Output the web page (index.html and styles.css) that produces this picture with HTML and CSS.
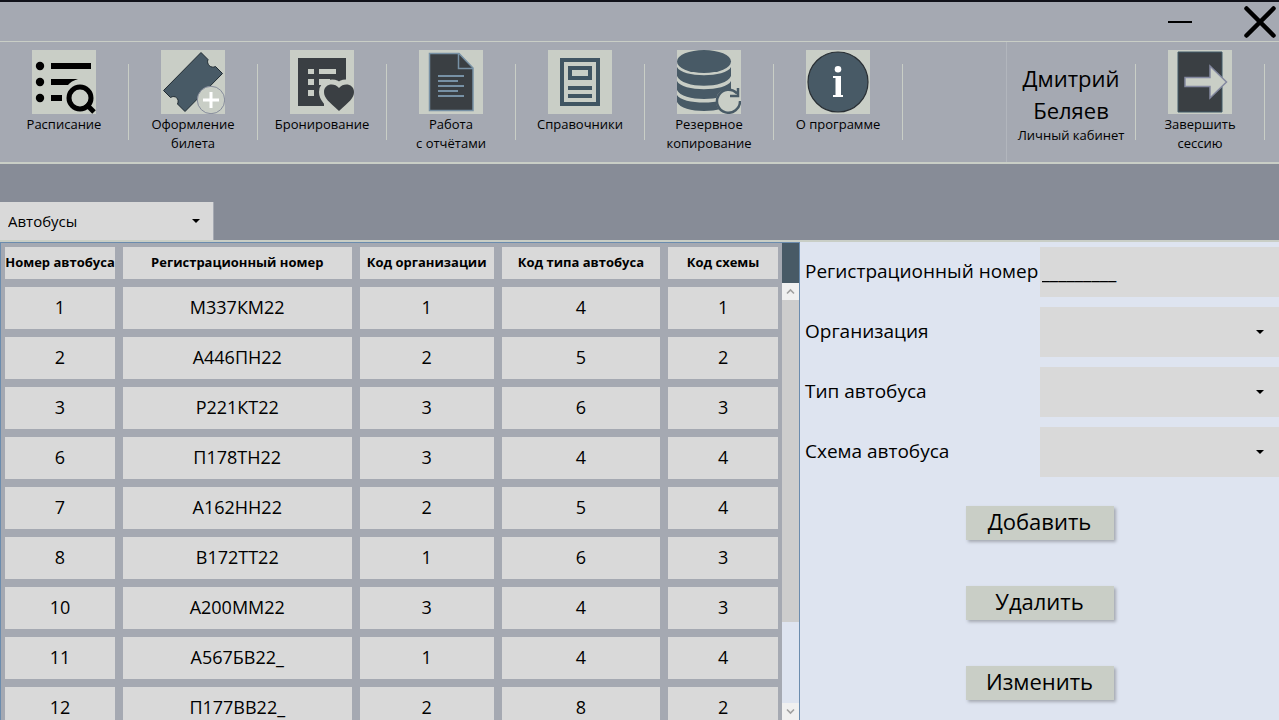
FILE: index.html
```html
<!DOCTYPE html>
<html lang="ru">
<head>
<meta charset="utf-8">
<title>Справочники</title>
<link rel="stylesheet" href="styles.css">
</head>
<body>
<header class="titlebar">
  <button class="win-btn minimize" aria-label="Свернуть"><svg width="24" height="40" viewBox="0 0 24 40"><path d="M0 20H24" stroke="#000" stroke-width="2"/></svg></button>
  <button class="win-btn close" aria-label="Закрыть"><svg width="32" height="40" viewBox="0 0 32 40"><path d="M2.500 6.500L29.500 33.500M29.500 6.500L2.500 33.500" stroke="#000" stroke-width="4.500" stroke-linecap="round"/></svg></button>
</header>

<nav class="toolbar">
  <button class="tool">
    <svg class="icon" viewBox="0 0 64 64"><g fill="#000"><circle cx="8" cy="16" r="4.200"/><circle cx="8" cy="32" r="4.200"/><circle cx="8" cy="48" r="4.200"/><path d="M19 13H59V19H19ZM19 29H46Q39 31 36 35H19ZM19 45H30V51H19Z"/></g><circle cx="48" cy="48" r="11" fill="none" stroke="#000" stroke-width="5"/><path d="M54 54L62 62" stroke="#000" stroke-width="5"/></svg>
    <span>Расписание</span>
  </button>
  <button class="tool">
    <svg class="icon" viewBox="0 0 64 64"><path d="M40 2.500L47 9.500C45 14 50 19 54.500 16.500L61.500 23.500L24 61.500L16.500 54C19 49 14 44.500 9.500 47.500L2.500 40.500Z" fill="#485a66" stroke="#1f2a31"/><circle cx="50" cy="50" r="13.700" fill="#c9cec6" stroke="#858b9b" stroke-width="1"/><path d="M50 42V58M42 50H58" stroke="#fff" stroke-width="3"/></svg>
    <span>Оформление<br>билета</span>
  </button>
  <button class="tool">
    <svg class="icon" viewBox="0 0 64 64"><path d="M8 8H56V34H30V56H8Z" fill="#3a3f43"/><path d="M24 32H34V56H24Z" fill="#3a3f43"/><path d="M18 19H24V24H18ZM29 19H46V24H29ZM18 29H24V35H18ZM29 29H40V35H29ZM18 40H24V46H18Z" fill="#c9cec6"/><path d="M49 61C39 52 34 48 34 42C34 34 44 32 49 38C54 32 64 34 64 42C64 48 59 52 49 61Z" fill="#c9cec6" stroke="#c9cec6" stroke-width="10"/><path d="M49 61C39 52 34 48 34 42C34 34 44 32 49 38C54 32 64 34 64 42C64 48 59 52 49 61Z" fill="#3a3f43"/></svg>
    <span>Бронирование</span>
  </button>
  <button class="tool">
    <svg class="icon" viewBox="0 0 64 64"><path d="M10.500 3.500H40L54 18V60.500H10.500Z" fill="#3a3f43" stroke="#7791a5" stroke-width="1.500"/><path d="M39.500 4V18.500H54" fill="none" stroke="#7791a5" stroke-width="1.500"/><path d="M19 26H45M19 31H39M19 36H45M19 41H39M19 46H45" stroke="#7791a5" stroke-width="2"/></svg>
    <span>Работа<br>с отчётами</span>
  </button>
  <button class="tool">
    <svg class="icon" viewBox="0 0 64 64"><path d="M14 10H50V54H14ZM22 18H42V28H22Z" fill="none" stroke="#405562" stroke-width="4"/><path d="M20 38H44M20 46H44" stroke="#405562" stroke-width="4"/></svg>
    <span>Справочники</span>
  </button>
  <button class="tool">
    <svg class="icon" viewBox="0 0 64 64"><g fill="#485a66"><ellipse cx="27" cy="11.500" rx="27" ry="11.500"/><path d="M0 17C5 28 49 28 54 17V26C49 39 5 39 0 26ZM0 31C5 42 49 42 54 31V40C49 52 5 52 0 40ZM0 45C5 55 49 55 54 45V52C49 64 5 64 0 52Z"/></g><circle cx="51" cy="51" r="12" fill="#c9cec6"/><path d="M60 43.500A11.500 11.500 0 1 0 63 51M61 38V46H53" fill="none" stroke="#485a66" stroke-width="2.500"/></svg>
    <span>Резервное<br>копирование</span>
  </button>
  <button class="tool">
    <svg class="icon" viewBox="0 0 64 64"><circle cx="32" cy="32" r="30" fill="#485a66" stroke="#292f34" stroke-width="1.200"/><circle cx="32" cy="19.200" r="3.300" fill="#fff"/><path d="M27 26H35V45H37V47H27V45H29.500V28H27Z" fill="#fff"/></svg>
    <span>О программе</span>
  </button>
  <div class="session">
    <button class="tool user"><span class="user-name">Дмитрий Беляев</span><span>Личный кабинет</span></button>
    <button class="tool">
      <svg class="icon" viewBox="0 0 64 64"><path d="M10 2H54V62H10Z" fill="#3a3f43" stroke="#405a68"/><path d="M17 27.500H42V16L58.500 32L42 48V36.500H17Z" fill="#c9cec6" stroke="#8489a0" stroke-width="1.500"/></svg>
      <span>Завершить<br>сессию</span>
    </button>
  </div>
</nav>

<div class="picker-bar">
  <div class="drop picker">
    <select aria-label="Справочник"><option>Автобусы</option></select>
  </div>
</div>

<main class="content">
  <section class="grid-panel">
    <table class="buses">
      <colgroup><col class="c-id"><col class="c-reg"><col class="c-org"><col class="c-type"><col class="c-scheme"></colgroup>
      <thead><tr><th>Номер автобуса</th><th>Регистрационный номер</th><th>Код организации</th><th>Код типа автобуса</th><th>Код схемы</th></tr></thead>
      <tbody>
        <tr><td>1</td><td>М337КМ22</td><td>1</td><td>4</td><td>1</td></tr>
        <tr><td>2</td><td>А446ПН22</td><td>2</td><td>5</td><td>2</td></tr>
        <tr><td>3</td><td>Р221КТ22</td><td>3</td><td>6</td><td>3</td></tr>
        <tr><td>6</td><td>П178ТН22</td><td>3</td><td>4</td><td>4</td></tr>
        <tr><td>7</td><td>А162НН22</td><td>2</td><td>5</td><td>4</td></tr>
        <tr><td>8</td><td>В172ТТ22</td><td>1</td><td>6</td><td>3</td></tr>
        <tr><td>10</td><td>А200ММ22</td><td>3</td><td>4</td><td>3</td></tr>
        <tr><td>11</td><td>А567БВ22_</td><td>1</td><td>4</td><td>4</td></tr>
        <tr><td>12</td><td>П177ВВ22_</td><td>2</td><td>8</td><td>2</td></tr>
      </tbody>
    </table>
    <div class="scroll">
      <div class="scroll-corner"></div>
      <button class="scroll-btn" aria-label="Вверх"><svg width="9" height="7" viewBox="0 0 9 7"><path d="M1 5.500L4.500 2L8 5.500" fill="none" stroke="#a0a0a0" stroke-width="1.600"/></svg></button>
      <div class="scroll-track"><div class="scroll-thumb"></div></div>
      <button class="scroll-btn" aria-label="Вниз"><svg width="9" height="7" viewBox="0 0 9 7"><path d="M1 1.500L4.500 5L8 1.500" fill="none" stroke="#a0a0a0" stroke-width="1.600"/></svg></button>
    </div>
  </section>

  <form class="editor">
    <div class="fields">
      <label for="reg">Регистрационный номер</label>
      <input class="reg" id="reg" type="text" value="_________">
      <label for="org">Организация</label>
      <div class="drop"><select id="org"><option></option></select></div>
      <label for="type">Тип автобуса</label>
      <div class="drop"><select id="type"><option></option></select></div>
      <label for="scheme">Схема автобуса</label>
      <div class="drop"><select id="scheme"><option></option></select></div>
    </div>
    <div class="actions">
      <button type="button">Добавить</button>
      <button type="button">Удалить</button>
      <button type="button">Изменить</button>
    </div>
  </form>
</main>
</body>
</html>
```
FILE: styles.css
```css
* { box-sizing: border-box; }

body {
  margin: 0;
  height: 100vh;
  display: flex;
  flex-direction: column;
  overflow: hidden;
  background: #dee4f0;
  color: #000;
  font-family: "Open Sans", "Noto Sans", sans-serif;
}

button, input, select {
  font: inherit;
  color: inherit;
  border: 0;
  border-radius: 0;
  padding: 0;
  margin: 0;
  background: none;
}

svg { display: block; }

.titlebar {
  flex: none;
  display: flex;
  justify-content: flex-end;
  gap: 52px;
  height: 42px;
  padding-right: 3px;
  border-top: 2px solid #11121a;
  border-bottom: 1px solid #c9cec6;
  background: #a5a9b2;
}

.toolbar {
  flex: none;
  display: flex;
  height: 122px;
  border-bottom: 2px solid #c9cec6;
  background: #a5a9b2;
}

.tool {
  position: relative;
  display: flex;
  flex-direction: column;
  align-items: center;
  width: 129px;
  padding: 8px 1px 0 0;
  font-size: 13px;
  line-height: 19px;
  text-align: center;
}

.tool::after {
  content: "";
  position: absolute;
  top: 22px;
  right: 0;
  width: 1px;
  height: 76px;
  background: #c9cec6;
}

.icon {
  width: 64px;
  height: 64px;
  margin-bottom: 1px;
  background: #c9cec6;
}

.session {
  display: flex;
  margin-left: auto;
  margin-right: 14px;
  border-left: 1px solid #b2b6bd;
}

.user { padding-top: 20px; }

.user-name {
  width: 110px;
  font-size: 22px;
  line-height: 32px;
}

.picker-bar {
  flex: none;
  display: flex;
  align-items: flex-end;
  height: 78px;
  border-bottom: 2px solid #c9cec6;
  background: #878c97;
}

.drop {
  position: relative;
  background: #d9d9d9;
}

.drop::after {
  content: "";
  position: absolute;
  top: calc(50% - 2px);
  right: 15px;
  border: 4px solid transparent;
  border-top-color: #000;
  border-bottom: 0;
  pointer-events: none;
}

.drop select {
  appearance: none;
  display: block;
  width: 100%;
  height: 100%;
}

.picker {
  width: 214px;
  height: 38px;
  border-right: 1px solid #a5a9b2;
}

.picker::after { right: 13px; }

.picker select {
  padding-left: 8px;
  font-size: 15px;
}

.content {
  flex: 1;
  min-height: 0;
  display: grid;
  grid-template-columns: 5fr 3fr;
  grid-template-columns: 800fr 479fr;
}

.grid-panel {
  display: flex;
  align-items: stretch;
  min-height: 0;
  overflow: hidden;
  border: 1px solid #6b8cae;
  border-bottom: 0;
}

.buses {
  flex: 1;
  align-self: flex-start;
  table-layout: fixed;
  border-spacing: 0;
  background: #a5a9b2;
}

.c-id, .c-scheme { width: 15.1%; }
.c-reg { width: 30.3%; }
.c-org { width: 18.2%; }
.c-type { width: 21.3%; }

.buses th, .buses td {
  padding: 0;
  border: 4px solid #a5a9b2;
  background: #d9d9d9;
  text-align: center;
  white-space: nowrap;
}

.buses th {
  height: 40px;
  padding-bottom: 2px;
  font-size: 13px;
  font-weight: 700;
  line-height: 18px;
}

.buses td {
  height: 50px;
  padding-bottom: 3px;
  font-size: 18px;
  line-height: 24px;
}

.scroll {
  flex: none;
  display: flex;
  flex-direction: column;
  width: 17px;
}

.scroll-corner {
  height: 40px;
  background: #485a66;
}

.scroll-btn {
  display: grid;
  place-items: center;
  height: 17px;
  background: #f0f0f0;
}

.scroll-track { flex: 1; }

.scroll-thumb {
  height: 80%;
  background: #cdcdcd;
}

.editor {
  display: flex;
  flex-direction: column;
  padding-top: 5px;
}

.fields {
  display: grid;
  grid-template-columns: 1fr 1fr;
  grid-auto-rows: 50px;
  row-gap: 10px;
}

.fields label {
  padding-left: 5px;
  font-size: 19px;
  line-height: 48px;
  white-space: nowrap;
}

.fields select, .reg { font-size: 19px; }

.reg {
  width: 100%;
  padding-left: 2px;
  background: #d9d9d9;
}

.actions {
  display: flex;
  flex-direction: column;
  align-items: center;
  gap: 46px;
  padding-top: 29px;
}

.actions button {
  width: 148px;
  height: 34px;
  padding-bottom: 4px;
  background: #c9cec6;
  box-shadow: 2px 2px 3px #a5a9b2;
  font-size: 22px;
  line-height: 30px;
}
```
